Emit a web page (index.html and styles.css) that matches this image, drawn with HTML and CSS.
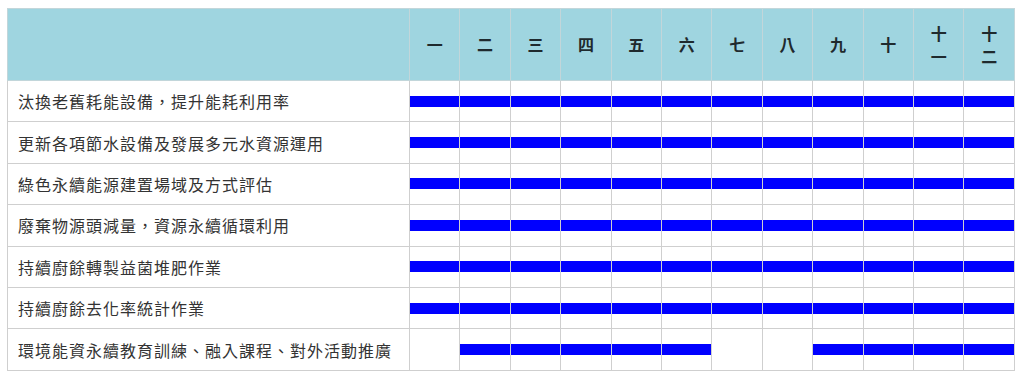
FILE: index.html
```html
<!DOCTYPE html>
<html lang="zh-Hant">
<head>
<meta charset="utf-8">
<title>年度計畫進度表</title>
<link rel="stylesheet" href="styles.css">
</head>
<body>
<table class="gantt">
  <colgroup>
    <col class="col-task">
    <col span="12">
  </colgroup>
  <thead>
    <tr class="head-row">
      <th class="task-head"></th>
      <th>一</th><th>二</th><th>三</th><th>四</th><th>五</th><th>六</th>
      <th>七</th><th>八</th><th>九</th><th>十</th><th>十<br>一</th><th>十<br>二</th>
    </tr>
  </thead>
  <tbody>
    <tr>
      <td class="task">汰換老舊耗能設備，提升能耗利用率</td>
      <td class="on"><div class="bar"></div></td><td class="on"><div class="bar"></div></td><td class="on"><div class="bar"></div></td><td class="on"><div class="bar"></div></td><td class="on"><div class="bar"></div></td><td class="on"><div class="bar"></div></td>
      <td class="on"><div class="bar"></div></td><td class="on"><div class="bar"></div></td><td class="on"><div class="bar"></div></td><td class="on"><div class="bar"></div></td><td class="on"><div class="bar"></div></td><td class="on"><div class="bar"></div></td>
    </tr>
    <tr>
      <td class="task">更新各項節水設備及發展多元水資源運用</td>
      <td class="on"><div class="bar"></div></td><td class="on"><div class="bar"></div></td><td class="on"><div class="bar"></div></td><td class="on"><div class="bar"></div></td><td class="on"><div class="bar"></div></td><td class="on"><div class="bar"></div></td>
      <td class="on"><div class="bar"></div></td><td class="on"><div class="bar"></div></td><td class="on"><div class="bar"></div></td><td class="on"><div class="bar"></div></td><td class="on"><div class="bar"></div></td><td class="on"><div class="bar"></div></td>
    </tr>
    <tr>
      <td class="task">綠色永續能源建置場域及方式評估</td>
      <td class="on"><div class="bar"></div></td><td class="on"><div class="bar"></div></td><td class="on"><div class="bar"></div></td><td class="on"><div class="bar"></div></td><td class="on"><div class="bar"></div></td><td class="on"><div class="bar"></div></td>
      <td class="on"><div class="bar"></div></td><td class="on"><div class="bar"></div></td><td class="on"><div class="bar"></div></td><td class="on"><div class="bar"></div></td><td class="on"><div class="bar"></div></td><td class="on"><div class="bar"></div></td>
    </tr>
    <tr>
      <td class="task">廢棄物源頭減量，資源永續循環利用</td>
      <td class="on"><div class="bar"></div></td><td class="on"><div class="bar"></div></td><td class="on"><div class="bar"></div></td><td class="on"><div class="bar"></div></td><td class="on"><div class="bar"></div></td><td class="on"><div class="bar"></div></td>
      <td class="on"><div class="bar"></div></td><td class="on"><div class="bar"></div></td><td class="on"><div class="bar"></div></td><td class="on"><div class="bar"></div></td><td class="on"><div class="bar"></div></td><td class="on"><div class="bar"></div></td>
    </tr>
    <tr>
      <td class="task">持續廚餘轉製益菌堆肥作業</td>
      <td class="on"><div class="bar"></div></td><td class="on"><div class="bar"></div></td><td class="on"><div class="bar"></div></td><td class="on"><div class="bar"></div></td><td class="on"><div class="bar"></div></td><td class="on"><div class="bar"></div></td>
      <td class="on"><div class="bar"></div></td><td class="on"><div class="bar"></div></td><td class="on"><div class="bar"></div></td><td class="on"><div class="bar"></div></td><td class="on"><div class="bar"></div></td><td class="on"><div class="bar"></div></td>
    </tr>
    <tr>
      <td class="task">持續廚餘去化率統計作業</td>
      <td class="on"><div class="bar"></div></td><td class="on"><div class="bar"></div></td><td class="on"><div class="bar"></div></td><td class="on"><div class="bar"></div></td><td class="on"><div class="bar"></div></td><td class="on"><div class="bar"></div></td>
      <td class="on"><div class="bar"></div></td><td class="on"><div class="bar"></div></td><td class="on"><div class="bar"></div></td><td class="on"><div class="bar"></div></td><td class="on"><div class="bar"></div></td><td class="on"><div class="bar"></div></td>
    </tr>
    <tr>
      <td class="task">環境能資永續教育訓練、融入課程、對外活動推廣</td>
      <td></td>
      <td class="on"><div class="bar"></div></td><td class="on"><div class="bar"></div></td><td class="on"><div class="bar"></div></td><td class="on"><div class="bar"></div></td><td class="on"><div class="bar"></div></td>
      <td></td><td></td>
      <td class="on"><div class="bar"></div></td><td class="on"><div class="bar"></div></td><td class="on"><div class="bar"></div></td><td class="on"><div class="bar"></div></td>
    </tr>
  </tbody>
</table>
</body>
</html>
```
FILE: styles.css
```css
html, body {
  margin: 0;
  padding: 0;
  background: #ffffff;
}

body {
  padding: 8px 0 0 7px;
  font-family: "Noto Sans CJK TC", "Noto Sans", sans-serif;
  color: #333333;
}

.gantt {
  width: 1008px;
  table-layout: fixed;
  border-collapse: collapse;
  border: 1px solid #c8c8c8;
}

.col-task {
  width: 402px;
}

.gantt th,
.gantt td {
  border: 1px solid #cfcfcf;
  padding: 0;
}

.head-row {
  height: 72px;
  background: #9fd5e0;
}

.head-row th {
  font-size: 16px;
  font-weight: 700;
  line-height: 23px;
  color: #1f2a2e;
  text-align: center;
  vertical-align: middle;
  border-color: #c2d6da;
}

.gantt tbody tr {
  height: 41.4px;
}

.task {
  font-size: 16px;
  letter-spacing: 1px;
  color: #333333;
  padding: 0 0 0 10px !important;
  vertical-align: middle;
  white-space: nowrap;
}

.gantt td.on {
  vertical-align: middle;
}

.bar {
  height: 11px;
  background: #0000ff;
}
```
